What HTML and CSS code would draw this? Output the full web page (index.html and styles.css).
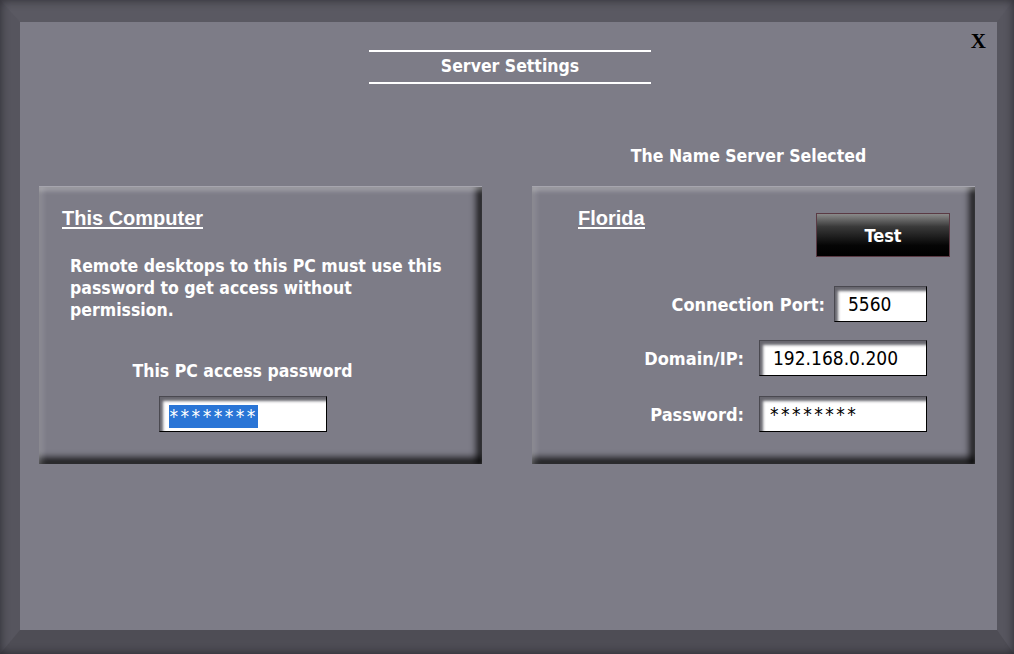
FILE: index.html
```html
<!DOCTYPE html>
<html>
<head>
    <link rel="stylesheet" href="styles.css">
</head>
<body>
    <div class="window">
        <div class="header">
            <div></div>
            <div class="title">Server Settings</div>
            <div class="close">X</div>
        </div>

        <div class="panels">
            <div class="column">
                <div class="caption">&nbsp;</div>
                <div class="panel">
                    <div class="panel-head">This Computer</div>
                    <p class="note">Remote desktops to this PC must use this password to get access without permission.</p>
                    <div class="local">
                        <div class="label">This PC access password</div>
                        <div class="field local-field"><span class="selected">********</span></div>
                    </div>
                </div>
            </div>

            <div class="column">
                <div class="caption">The Name Server Selected</div>
                <div class="panel">
                    <div class="server-top">
                        <div class="panel-head">Florida</div>
                        <button class="test-btn">Test</button>
                    </div>
                    <div class="row port-row">
                        <span class="label">Connection Port:</span>
                        <div class="field port-field">5560</div>
                    </div>
                    <div class="row">
                        <span class="label">Domain/IP:</span>
                        <div class="field wide-field">192.168.0.200</div>
                    </div>
                    <div class="row last-row">
                        <span class="label">Password:</span>
                        <div class="field wide-field stars">********</div>
                    </div>
                </div>
            </div>
        </div>
    </div>
</body>
</html>
```

FILE: styles.css
```css
body
{
    margin: 0;
    background-color: #7d7c87;
    font-family: "DejaVu Sans Condensed", "DejaVu Sans", sans-serif;
    font-weight: bold;
    color: #ffffff;
}
.window
{
    position: relative;
    box-sizing: border-box;
    width: 1014px;
    height: 654px;
    border-style: solid;
    border-width: 22px 17px 24px 20px;
    border-color: #5a5962 #57565f #4e4d55 #56555e;
    background-color: #7d7c87;
}
/* dark outer edge of the frame bevel */
.window::before
{
    content: "";
    position: absolute;
    top: -22px;
    right: -17px;
    bottom: -24px;
    left: -20px;
    box-shadow: inset 0 0 9px 1px rgba(20, 20, 25, 0.55);
    pointer-events: none;
}
.header
{
    display: grid;
    grid-template-columns: 1fr 282px 1fr;
    padding-top: 28px;
    padding-left: 3px;
}
.title
{
    border-top: 2px solid #ffffff;
    border-bottom: 2px solid #ffffff;
    height: 30px;
    line-height: 29px;
    text-align: center;
    font-size: 17.5px;
}
.close
{
    justify-self: end;
    margin-top: -21px;
    margin-right: 11px;
    font-family: "Liberation Serif", serif;
    font-size: 21px;
    color: #000000;
}
.panels
{
    display: grid;
    grid-template-columns: 443px 443px;
    column-gap: 50px;
    padding-left: 19px;
    margin-top: 62px;
}
.caption
{
    height: 40px;
    text-align: center;
    font-size: 17.5px;
    padding-right: 10px;
}
.panel
{
    box-sizing: border-box;
    height: 278px;
    border-top: 1px solid #a6a5ae;
    background-color: #7d7c87;
    box-shadow: inset 0 5px 4px -1px rgba(255, 255, 255, 0.3),
                inset 5px 0 5px -1px rgba(255, 255, 255, 0.18),
                inset -8px 0 6px -2px rgba(0, 0, 0, 0.7),
                inset 0 -9px 6px -2px rgba(0, 0, 0, 0.7);
    padding: 23px 0 0 23px;
}
.panel-head
{
    display: inline-block;
    font-family: "Liberation Sans", sans-serif;
    font-size: 20px;
    line-height: 17px;
    border-bottom: 2px solid #ffffff;
}
.note
{
    margin: 26px 37px 0 8px;
    font-size: 17.5px;
    line-height: 22px;
}
.local
{
    display: flex;
    flex-direction: column;
    align-items: center;
    padding-right: 59px;
    margin-top: 40px;
}
.label
{
    font-size: 17.5px;
}
.field
{
    box-sizing: border-box;
    height: 36px;
    background-color: #ffffff;
    border-right: 1px solid #000000;
    border-bottom: 1px solid #000000;
    border-top: 1px solid #4a4950;
    border-left: 1px solid #4a4950;
    box-shadow: inset 4px 5px 3px -1px #67666e;
    color: #000000;
    font-family: "DejaVu Sans Condensed", "DejaVu Sans", sans-serif;
    font-weight: normal;
    font-size: 19px;
    line-height: 34px;
    padding-left: 13px;
}
.local-field
{
    display: flex;
    align-items: center;
    width: 168px;
    margin-top: 15px;
    padding-left: 9px;
    padding-top: 4px;
}
.selected
{
    background-color: #2a75d6;
    color: #ffffff;
    line-height: 23px;
    letter-spacing: 2.5px;
    padding-left: 1px;
}
.stars
{
    letter-spacing: 2.5px;
    padding-left: 10px;
}
.server-top
{
    display: flex;
    justify-content: space-between;
    align-items: flex-start;
    padding-left: 23px;
    padding-right: 25px;
}
.test-btn
{
    margin-top: 3px;
    width: 134px;
    height: 44px;
    border: 1px solid #5a3a44;
    background: linear-gradient(#8a8a8a 0%, #3a3a3a 30%, #050505 75%, #000000 100%);
    color: #ffffff;
    font-family: "DejaVu Sans Condensed", "DejaVu Sans", sans-serif;
    font-weight: bold;
    font-size: 18px;
    padding: 0;
    cursor: pointer;
}
.row
{
    display: flex;
    justify-content: flex-end;
    align-items: center;
    padding-right: 48px;
    margin-top: 18px;
}
.row .label
{
    font-size: 18px;
    margin-right: 15px;
}
.port-row
{
    margin-top: 29px;
}
.port-row .label
{
    margin-right: 9px;
}
.last-row
{
    margin-top: 20px;
}
.port-field
{
    width: 93px;
}
.wide-field
{
    width: 168px;
}
```
